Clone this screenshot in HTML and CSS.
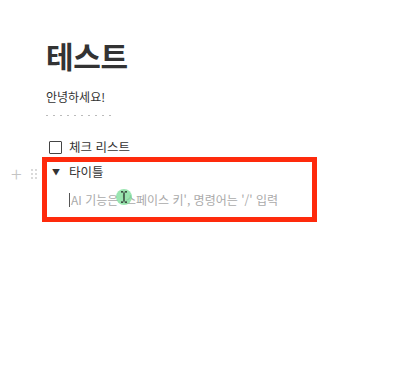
FILE: index.html
```html
<!DOCTYPE html>
<html lang="ko">
<head>
<meta charset="utf-8">
<link rel="stylesheet" href="styles.css">
</head>
<body>
<div class="page">
  <h1 class="title">테스트</h1>
  <p class="para">안녕하세요!</p>
  <div class="clipped"></div>
  <div class="todo">
    <span class="checkbox"></span>
    <span class="todo-text">체크 리스트</span>
  </div>
  <div class="toggle">
    <div class="handles">
      <span class="plus">+</span>
      <svg class="grip" width="6" height="10" viewBox="0 0 6 10"><g fill="#c8c8c8"><circle cx="1" cy="1" r="0.9"/><circle cx="5" cy="1" r="0.9"/><circle cx="1" cy="5" r="0.9"/><circle cx="5" cy="5" r="0.9"/><circle cx="1" cy="9" r="0.9"/><circle cx="5" cy="9" r="0.9"/></g></svg>
    </div>
    <div class="toggle-head">
      <span class="arrow">▼</span>
      <span class="toggle-title">타이틀</span>
    </div>
    <div class="toggle-body">
      <span class="caret"></span><span class="placeholder">AI 기능은 '스페이스 키', 명령어는 '/' 입력</span>
      <span class="pointer">
        <svg width="8" height="12" viewBox="0 0 8 12"><path d="M1 0.8h2.2M4.8 0.8H7M4 1.5v9M1 11.2h2.2M4.8 11.2H7" stroke="#222" stroke-width="1.2" fill="none"/></svg>
      </span>
    </div>
  </div>
</div>
</body>
</html>
```

FILE: styles.css
```css
* { box-sizing: border-box; }
html, body { margin: 0; padding: 0; background: #fff; }
body {
  font-family: "Noto Sans CJK KR", "Noto Sans", sans-serif;
  color: #37352f;
  width: 400px;
  height: 380px;
  overflow: hidden;
}
.page {
  padding: 35px 0 0 46px;
}
.title {
  margin: 0;
  font-size: 30px;
  font-weight: 700;
  line-height: 40px;
  color: #333;
  letter-spacing: -0.3px;
}
.para {
  margin: 13px 0 0;
  font-size: 12px;
  line-height: 18px;
  color: #333;
}
.clipped {
  margin-top: 9px;
  width: 66px;
  height: 1px;
  background-image: repeating-linear-gradient(90deg, #bbb 0 2px, transparent 2px 7px);
}
.todo {
  display: flex;
  align-items: center;
  gap: 7px;
  margin-top: 23px;
  height: 16px;
  padding-left: 3px;
}
.checkbox {
  width: 13px;
  height: 13px;
  border: 1.5px solid #444;
  border-radius: 1px;
}
.todo-text, .toggle-title {
  font-size: 12.5px;
  color: #333;
  line-height: 16px;
}
.toggle {
  position: relative;
  margin: 2px 0 0 -4px;
  width: 275px;
  height: 65px;
  border: 5px solid #fe2a0c;
  padding: 2px 0 0 5px;
}
.handles {
  position: absolute;
  left: -36px;
  top: 3px;
  display: flex;
  align-items: center;
  gap: 9px;
}
.plus {
  font-size: 20px;
  line-height: 18px;
  color: #c4c4c4;
  font-weight: 300;
}
.toggle-head {
  display: flex;
  align-items: center;
  height: 16px;
  gap: 10px;
}
.arrow {
  font-size: 8px;
  color: #333;
  width: 7px;
  line-height: 16px;
}
.toggle-body {
  position: relative;
  display: flex;
  align-items: center;
  margin: 12px 0 0 17px;
  height: 16px;
}
.caret {
  width: 1px;
  height: 14px;
  background: #555;
  margin-right: 1px;
}
.placeholder {
  font-size: 12px;
  color: #aaa;
  line-height: 16px;
  white-space: nowrap;
}
.pointer {
  position: absolute;
  left: 47px;
  top: -3px;
  width: 16px;
  height: 16px;
  border-radius: 50%;
  background: rgba(120, 220, 150, 0.75);
  display: flex;
  align-items: center;
  justify-content: center;
}
```
